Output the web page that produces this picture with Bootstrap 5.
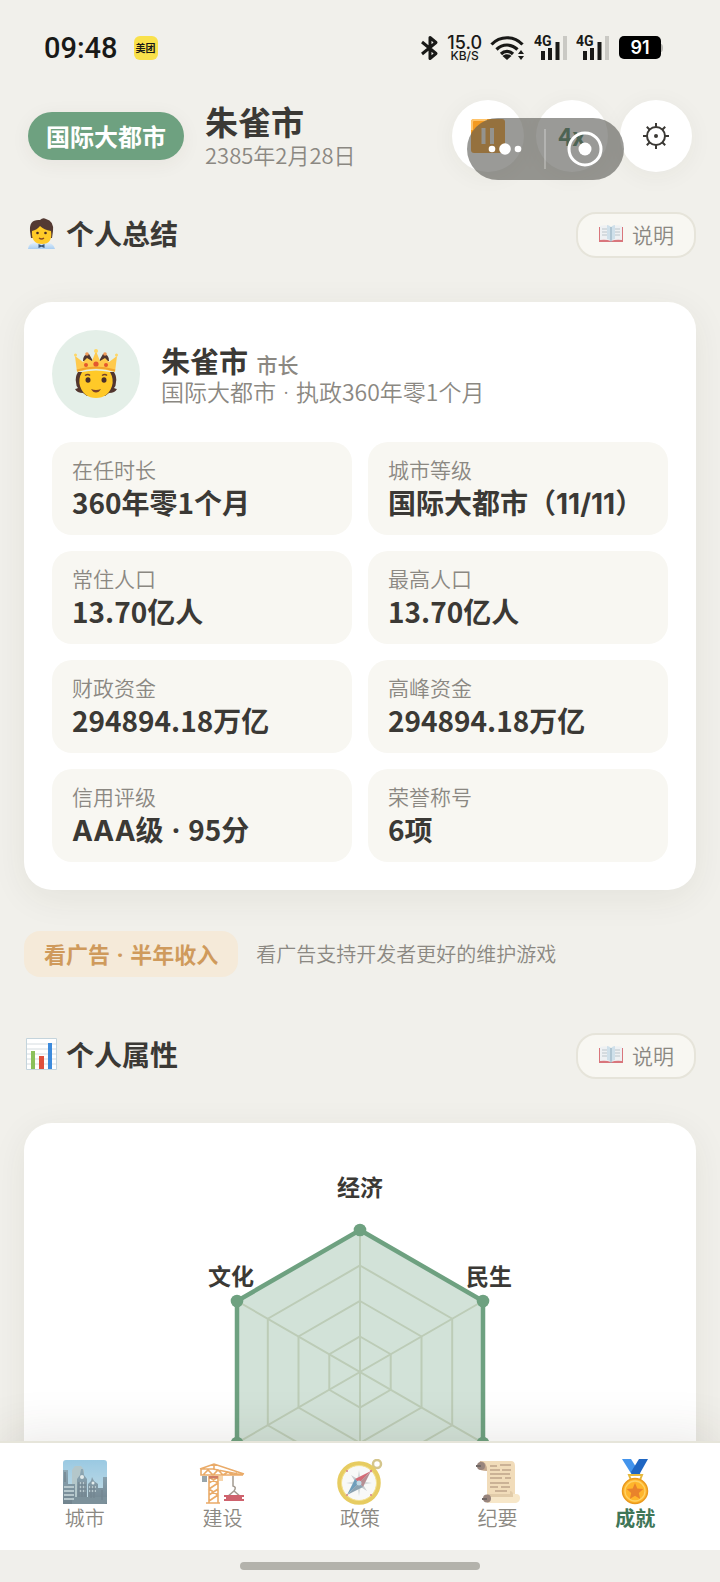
<!DOCTYPE html>
<html lang="zh-CN">
<head>
<meta charset="utf-8">
<meta name="viewport" content="width=device-width, initial-scale=1">
<title>朱雀市 · 成就</title>
<link href="https://cdn.jsdelivr.net/npm/bootstrap@5.3.0/dist/css/bootstrap.min.css" rel="stylesheet">
<style>
:root { --ink: #3b3935; --muted: #8b8882; --green: #6ea180; --deep: #3f7657; --page: #f1f0eb; }
body { background: var(--page); color: var(--ink); font-family: "Noto Sans CJK SC", sans-serif; font-size: 21px; line-height: 30px; }
svg { display: block; flex: none; }
button { color: inherit; }
.status { height: 96px; padding: 0 56px 0 44px; color: #191917; font-family: Inter, "Noto Sans CJK SC", sans-serif; }
.clock { font-family: Roboto, sans-serif; font-size: 29px; font-weight: 500; }
.app-tag { width: 24px; height: 24px; border-radius: 6px; background: #f9e14b; font-size: 10px; line-height: 24px; font-weight: 700; }
.net-speed { font-size: 18px; line-height: 15px; font-weight: 500; }
.net-speed small { font-size: 12px; line-height: 12px; display: block; }
.city-head { padding: 4px 28px 0; }
.rank { background: var(--green); font-size: 24px; line-height: 48px; padding: 0 18px; box-shadow: 0 4px 20px rgba(60,50,30,.06); }
.city-title { margin-left: 21px; }
.city-name { font-size: 33px; line-height: 36px; }
.date { font-size: 22px; }
.round { width: 72px; height: 72px; background: #fff; font-size: 24px; box-shadow: 0 4px 24px rgba(60,50,30,.05); }
.capsule { right: 68px; top: 18px; height: 62px; width: 157px; border-radius: 31px; background: rgba(86,86,82,.6); }
.capsule i { width: 2px; height: 40px; background: rgba(255,255,255,.25); }
.muted { color: var(--muted); font-weight: 350; }
.dot { font-family: "Noto Sans", sans-serif; line-height: 1; margin: 0 2px; }
.num { font-family: Inter, sans-serif; line-height: 1; }
.scroller { overflow-y: auto; scrollbar-width: none; padding: 40px 24px 0; }
.section-title { font-size: 28px; line-height: 42px; padding-bottom: 4px; }
.help { height: 46px; padding: 0 20px 2px; border: 2px solid #e6e4da; border-radius: 20px; background: #f8f7f2; }
.panel { background: #fff; border-radius: 28px; padding: 28px; margin-top: 44px; box-shadow: 0 8px 36px rgba(60,50,30,.07); }
.avatar { width: 88px; height: 88px; background: #e4efe8; }
.person { font-size: 29px; line-height: 34px; }
.role { font-size: 21px; line-height: 1; margin-left: 2px; color: var(--muted); font-weight: 500; }
.place { font-size: 23px; line-height: 28px; }
.tile { background: #f8f7f2; border-radius: 20px; padding: 12px 20px 15px; }
.tile dd { font-size: 28px; line-height: 36px; font-weight: 700; margin: 0; white-space: nowrap; }
.tile dt { font-weight: 350; color: var(--muted); }
.ad { margin: 41px 0 56px; }
.ad-btn { height: 46px; padding: 0 20px 2px; border-radius: 16px; background: #f5ead9; color: #cf9a5c; font-size: 22px; font-weight: 700; }
.ad-note { font-size: 20px; margin-left: 18px; }
.radar { width: 360px; max-width: 100%; margin: 11px auto 0; font-size: 23px; font-weight: 700; fill: var(--ink); }
.tabs { border-top: 2px solid #e6e5da; background: #fff; padding: 16px 16px 19px; box-shadow: 0 -8px 48px rgba(60,50,30,.1); z-index: 2; }
.tabs a { font-size: 20px; line-height: 26px; color: var(--muted); font-weight: 350; }
.tabs a svg { opacity: .72; }
.tabs a.active { color: var(--deep); font-weight: 700; }
.tabs a.active svg { opacity: 1; }
.home { height: 32px; background: #f0efeb; z-index: 3; }
.home span { width: 33.333%; height: 8px; background: #b3b2ab; }
</style>
</head>
<body>
<div class="vh-100 d-flex flex-column overflow-hidden">

<div class="status d-flex align-items-center justify-content-between flex-shrink-0">
  <div class="d-flex align-items-center gap-3">
    <span class="clock">09:48</span>
    <span class="app-tag text-center text-nowrap">美团</span>
  </div>
  <div class="d-flex align-items-center gap-2">
    <svg width="18" height="26" viewBox="1 0 18 26" fill="none" stroke="#191917" stroke-width="3" stroke-linejoin="round" aria-label="蓝牙"><path d="M2 7l14 11.500-6 5V2.500l6 5L2 19"/></svg>
    <span class="net-speed text-center">15.0<small>KB/S</small></span>
    <svg width="36" height="26" viewBox="0 0 36 26" fill="none" stroke="#191917" stroke-width="3.200"><path d="M1.500 9.500C10 0.500 24 0.500 32.500 9.500M6.500 14.500c6-6 15-6 21 0M11 19c3.500-3.500 8.500-3.500 12 0"/><path d="M12.500 21c2.500-2.500 6.500-2.500 9 0L17 25z" fill="#191917" stroke="none"/><path d="M28 19l3-4 3 4zM28 21l3 4 3-4z" fill="#191917" stroke="none"/></svg>
    <svg width="34" height="32" viewBox="0 -3 34 32" fill="#191917"><text x="0" y="11" font-family="Roboto" font-size="14" font-weight="700">4G</text><path d="M7 16h4v9H7zM14 13h4v12h-4zM21.500 7h4v18h-4z"/><path d="M29 1h4v24h-4z" fill="#cac9c4"/></svg>
    <svg width="34" height="32" viewBox="0 -3 34 32" fill="#191917"><text x="0" y="11" font-family="Roboto" font-size="14" font-weight="700">4G</text><path d="M7 16h4v9H7zM14 13h4v12h-4zM21.500 7h4v18h-4z"/><path d="M29 1h4v24h-4z" fill="#cac9c4"/></svg>
    <svg width="46" height="24" viewBox="0 0 46 24"><rect x="1" width="42" height="23" rx="5"/><path d="M43 8q2 0 2 4t-2 4z" fill="#b9b8b3"/><text x="22" y="18" font-size="18" font-weight="600" fill="#fff" text-anchor="middle">91</text></svg>
  </div>
</div>

<header class="city-head d-flex align-items-center flex-shrink-0">
  <span class="rank rounded-pill text-white fw-bold text-nowrap">国际大都市</span>
  <div class="city-title text-nowrap">
    <h1 class="city-name fw-bold m-0">朱雀市</h1>
    <div class="date muted">2385年2月28日</div>
  </div>
  <div class="ms-auto d-flex position-relative" style="gap:12px">
    <button type="button" class="btn round rounded-circle p-0 d-flex align-items-center justify-content-center" aria-label="暂停">
      <svg width="34" height="34" viewBox="0 0 34 34"><rect width="34" height="34" rx="3" fill="#f39a22"/><path d="M1 11V3q0-2 2-2h13" stroke="#ffc46b" stroke-width="2" fill="none"/><path d="M10.500 9h4v16h-4zM19 9h4v16h-4z" fill="#f1eee8"/></svg>
    </button>
    <button type="button" class="btn round rounded-circle p-0 fw-bold" style="color:var(--deep)">4x</button>
    <button type="button" class="btn round rounded-circle p-0 d-flex align-items-center justify-content-center" aria-label="设置">
      <svg width="28" height="28" viewBox="-14 -14 28 28" fill="none" stroke="#3b3935" stroke-width="2"><circle r="9"/><circle r="2" fill="#3b3935" stroke="none"/><path d="M0-9v-4M0 9v4M-9 0h-4M9 0h4M-6.300-6.300l-2.900-2.900M6.300 6.300l2.900 2.900M-6.300 6.300l-2.900 2.900M6.300-6.300l2.900-2.900"/></svg>
    </button>
    <div class="capsule position-absolute d-flex align-items-center">
      <button type="button" class="btn p-0 border-0 flex-fill d-flex justify-content-center" aria-label="更多"><svg width="34" height="14" fill="#fff"><circle cx="4" cy="7" r="3.300"/><circle cx="17" cy="7" r="5.800"/><circle cx="30" cy="7" r="3.300"/></svg></button>
      <i></i>
      <button type="button" class="btn p-0 border-0 flex-fill d-flex justify-content-center" aria-label="关闭"><svg width="36" height="36" viewBox="-18 -18 36 36"><circle r="16" fill="none" stroke="#fff" stroke-width="3"/><circle r="6.500" fill="#fff"/></svg></button>
    </div>
  </div>
</header>

<svg width="0" height="0" class="position-absolute" aria-hidden="true">
  <symbol id="book" viewBox="0 0 26 20"><path d="M1 3v15h24V3z" fill="#d9767c"/><path d="M2 2q6-2 11 1 5-3 11-1v14q-6-1-11 1-5-2-11-1z" fill="#eef1f3"/><path d="M13 3q-2-2-4-2v14q2 0 4 2 2-2 4-2V1q-2 0-4 2z" fill="#cfe0ea"/><path d="M13 3v15" stroke="#8fabbb"/><path d="M4 5h5M4 8h5M4 11h5M17 5h5M17 8h5M17 11h5" stroke="#bcc5ca"/></symbol>
</svg>

<main class="scroller flex-grow-1">
  <section>
    <div class="d-flex justify-content-between align-items-center">
      <h2 class="section-title fw-bold m-0 d-flex align-items-center gap-2">
        <svg width="34" height="34" viewBox="0 0 34 34"><defs><linearGradient id="shirt" x2="0" y2="1"><stop stop-color="#e6f2fc"/><stop offset="1" stop-color="#a9cef2"/></linearGradient></defs><path d="M4 33q0-6 9-7h8q9 1 10 7z" fill="url(#shirt)"/><path d="M6 15Q5 3 16 4q3-3 6-1 8 2 7 12l-1 7H7z" fill="#543a33"/><path d="M8 15q5-1 8-5 4 4 11 5 2 13-9 13T8 15z" fill="#ffca28"/><circle cx="13.500" cy="17" r="1.300" fill="#4a2d28"/><circle cx="21.500" cy="17" r="1.300" fill="#4a2d28"/><path d="M15 22q2.500 2 5 0" stroke="#8a4a20" fill="none" stroke-width="1.400"/><path d="M14.500 28l3 1.300 3-1.300v4l-3-1.300-3 1.300z" fill="#3c5878"/></svg>
        个人总结</h2>
      <button type="button" class="help muted d-flex align-items-center gap-2"><svg width="26" height="20"><use href="#book"/></svg>说明</button>
    </div>
    <div class="panel">
      <div class="d-flex align-items-center mb-4">
        <div class="avatar rounded-circle d-flex align-items-center justify-content-center">
          <svg width="44" height="50" viewBox="0 0 44 50"><path d="M4 23q-3 5-2 10 0 4 2 6-2 1-3 1 2 4 8 4l4 3h18l4-3q6 0 8-4-1 0-3-1 2-2 2-6 1-5-2-10z" fill="#51362f"/><path d="M8 23q14-3 28 0 4 7 2 14-4 12-16 12T6 37q-2-7 2-14z" fill="#ffc928"/><path d="M9 12q0-7 6-7l4 7zM25 12l4-7q6 0 6 7z" fill="#51362f"/><path d="M3 23L1 7l8 6 4-4 5 3 4-10 4 10 5-3 4 4 8-6-2 16q-19-6-38 0z" fill="#ffca4c"/><path d="M3 21.500q19-6 38 0" stroke="#f2a52c" stroke-width="2" fill="none"/><circle cx="22" cy="15" r="2.600" fill="#e4572e"/><circle cx="12" cy="16" r="2" fill="#e4572e"/><circle cx="32" cy="16" r="2" fill="#e4572e"/><g fill="#ffd765"><circle cx="1.500" cy="6" r="1.500"/><circle cx="22" cy="2" r="2"/><circle cx="42.500" cy="6" r="1.500"/></g><circle cx="13" cy="5" r="1.800" fill="#f09a58"/><circle cx="31" cy="5" r="1.800" fill="#f09a58"/><ellipse cx="14" cy="31" rx="2.500" ry="2.800" fill="#4a302b"/><ellipse cx="30" cy="31" rx="2.500" ry="2.800" fill="#4a302b"/><path d="M11 26.500q3-2 5 0M28 26.500q3-2 5 0" stroke="#74432a" stroke-width="1.500" fill="none"/><path d="M17 40q5 2 10 0-2 3.500-5 3.500T17 40" fill="#7a4228"/></svg>
        </div>
        <div style="margin-left:21px">
          <div class="person fw-bold">朱雀市 <span class="role">市长</span></div>
          <div class="place muted">国际大都市 <span class="dot">·</span> 执政360年零1个月</div>
        </div>
      </div>
      <div class="row g-3">
        <div class="col-6"><dl class="tile m-0"><dt>在任时长</dt><dd>360年零1个月</dd></dl></div>
        <div class="col-6"><dl class="tile m-0"><dt>城市等级</dt><dd>国际大都市（<span class="num">11/11</span>）</dd></dl></div>
        <div class="col-6"><dl class="tile m-0"><dt>常住人口</dt><dd>13.70亿人</dd></dl></div>
        <div class="col-6"><dl class="tile m-0"><dt>最高人口</dt><dd>13.70亿人</dd></dl></div>
        <div class="col-6"><dl class="tile m-0"><dt>财政资金</dt><dd>294894.18万亿</dd></dl></div>
        <div class="col-6"><dl class="tile m-0"><dt>高峰资金</dt><dd>294894.18万亿</dd></dl></div>
        <div class="col-6"><dl class="tile m-0"><dt>信用评级</dt><dd><span class="num">AAA</span>级 <span class="dot">·</span> 95分</dd></dl></div>
        <div class="col-6"><dl class="tile m-0"><dt>荣誉称号</dt><dd>6项</dd></dl></div>
      </div>
    </div>
  </section>

  <div class="ad d-flex align-items-center">
    <button type="button" class="ad-btn border-0 text-nowrap">看广告 <span class="dot">·</span> 半年收入</button>
    <span class="ad-note muted">看广告支持开发者更好的维护游戏</span>
  </div>

  <section>
    <div class="d-flex justify-content-between align-items-center">
      <h2 class="section-title fw-bold m-0 d-flex align-items-center gap-2">
        <svg width="34" height="34" viewBox="0 0 34 34"><path d="M2.500 1.500h30v31h-30z" fill="#fff" stroke="#c4d4dc"/><path d="M3 7h29M3 12h29M3 17h29M3 22h29M3 27h29" stroke="#d5dce0"/><path d="M7 14h4v18H7z" fill="#8cc05b"/><path d="M15 19h5v13h-5z" fill="#e0503c"/><path d="M24 6h4v26h-4z" fill="#3d8bdc"/></svg>
        个人属性</h2>
      <button type="button" class="help muted d-flex align-items-center gap-2"><svg width="26" height="20"><use href="#book"/></svg>说明</button>
    </div>
    <div class="panel">
      <svg class="radar" viewBox="-180 -210 360 410" text-anchor="middle" role="img" aria-label="个人属性雷达图">
        <g fill="none" stroke="#e0dfcf" stroke-width="2">
          <path d="M0-35.500l30.700 17.750v35.500L0 35.500l-30.700-17.750v-35.500z"/>
          <path d="M0-71l61.500 35.500v71L0 71l-61.500-35.500v-71z"/>
          <path d="M0-106.500l92.200 53.250v106.500L0 106.500l-92.200-53.250v-106.500z"/>
          <path d="M0-142V142M-123-71L123 71M-123 71L123-71"/>
        </g>
        <path d="M0-142l123 71V71L0 142-123 71V-71z" fill="#6ea180" fill-opacity=".31" stroke="#6ea180" stroke-width="4.500"/>
        <g fill="#6ea180"><circle cy="-142" r="6.300"/><circle cx="123" cy="-71" r="6.300"/><circle cx="123" cy="71" r="6.300"/><circle cy="142" r="6.300"/><circle cx="-123" cy="71" r="6.300"/><circle cx="-123" cy="-71" r="6.300"/></g>
        <text y="-176">经济</text><text x="129" y="-87">民生</text><text x="-129" y="-87">文化</text>
      </svg>
    </div>
  </section>
</main>

<nav class="tabs d-flex flex-shrink-0 position-relative">
  <a href="#city" class="flex-fill w-100 text-decoration-none d-flex flex-column align-items-center">
    <svg width="46" height="46" viewBox="0 0 46 46"><defs><linearGradient id="sky" x2="0" y2="1"><stop stop-color="#74b5d8"/><stop offset="1" stop-color="#b4d3de"/></linearGradient><linearGradient id="dusk" x2="0" y2="1"><stop stop-color="#63899b"/><stop offset="1" stop-color="#3b5463"/></linearGradient></defs><rect x="1" y="1" width="44" height="44" rx="3" fill="url(#sky)"/><path d="M10 45V11l3-4h6l3 4v34z" fill="#98b2b7"/><path d="M1 11h5v34H1zM1 25h12v20H1zM15 20l3-4 1-6 2 0 1 6 3 4v25H15zM26 25l3-3 1-4 2 4 4 3v20H26zM36 29h5V18h4v27h-9z" fill="url(#dusk)"/><path d="M10 38h35v4q0 3-3 3H10z" fill="#4b6776"/><path d="M2 28h10M2 32h10M2 36h10M2 40h10M17 24h7M17 28h7M17 32h7M27 28h7M27 32h7" stroke="#b7cbd0" stroke-width="1.300"/><path d="M17 23v15M20 23v15M23 23v15M29 27v12M32 27v12M3 13v10M40 31v10" stroke="#405a68" stroke-width="1.500"/><circle cx="20" cy="18" r="2" fill="#dbe5e5"/><circle cx="31" cy="24" r="1.500" fill="#dbe5e5"/></svg>城市</a>
  <a href="#build" class="flex-fill w-100 text-decoration-none d-flex flex-column align-items-center">
    <svg width="46" height="46" viewBox="0 0 46 46" fill="none" stroke="#e28b2f" stroke-width="1.600"><path d="M1 10l14-5 30 10M2 10h12l30 6H2zM4 16l5-5 5 5 5-5 5 5 5-3 5 3 4-2M15 5v5M10 17v27M19 17v27M10 24l9-6M10 18l9 6-9 6 9 6-9 6M19 24l-9 6M19 30l-9 6M19 36l-9 6M7 44h14"/><path d="M3 17h5v6H3z" fill="#72838a" stroke="none"/><path d="M10 17h9v2.500h-9z" fill="#bd4b29" stroke="none"/><path d="M20 17h4v5h-4z" fill="#f3c58d" stroke="none"/><path d="M34 17v10q4 1 1 5M28 38l7-6 7 6" stroke="#807466" stroke-width="1.500"/><path d="M25 36h20v2h-2v2h2v2H25v-2h2v-2h-2z" fill="#bc2636" stroke="none"/></svg>建设</a>
  <a href="#policy" class="flex-fill w-100 text-decoration-none d-flex flex-column align-items-center">
    <svg width="46" height="46" viewBox="0 0 46 46"><circle cx="40" cy="5" r="4" fill="none" stroke="#c4b060" stroke-width="2.500"/><circle cx="22" cy="24" r="19.500" fill="#f6f7f6" stroke="#deb925" stroke-width="4.500"/><circle cx="22" cy="24" r="17.500" fill="none" stroke="#f1d86b"/><path d="M22 11l2 11 11 2-11 2-2 11-2-11-11-2 11-2z" fill="#c9d0d2"/><path d="M14 16l8 5 8-5-5 8 5 8-8-5-8 5 5-8z" fill="#b3bcc0"/><path d="M34 12L18 20l4 4z" fill="#c43443"/><path d="M34 12L22 24l4 4z" fill="#99656c"/><path d="M10 36l8-16 4 4z" fill="#3979a2"/><path d="M10 36l12-12 4 4z" fill="#5f7f94"/><circle cx="22" cy="24" r="2.500" fill="#a9cadb"/><g fill="#c8545c"><circle cx="10" cy="12" r="1"/><circle cx="34" cy="12" r="1.200"/><circle cx="34" cy="36" r="1"/><circle cx="10" cy="36" r="1"/></g></svg>政策</a>
  <a href="#notes" class="flex-fill w-100 text-decoration-none d-flex flex-column align-items-center">
    <svg width="46" height="46" viewBox="0 0 46 46"><path d="M5 2h31q4 0 4 5v29H12V11H5z" fill="#edcfa0"/><path d="M12 35h29q4 0 4 4t-4 5H12z" fill="#f4deb5"/><path d="M12 35h23v-3q3 0 3 4v2H12z" fill="#d6b888"/><path d="M5 2q7 0 7 10-7 0-9-3z" fill="#ae8662"/><circle cx="6" cy="7" r="4" fill="#71554a"/><circle cx="12" cy="39.500" r="4" fill="#71554a"/><path d="M1 7h5M7 40h5" stroke="#3d302c" stroke-width="2"/><path d="M15 7h7M25 6h11M15 11h10M27 11h9M15 15h20M15 19h12M30 19h6M15 24h19M15 28h8M26 28h9M20 32h12" stroke="#a7825d" stroke-width="1.300"/></svg>纪要</a>
  <a href="#honor" class="active flex-fill w-100 text-decoration-none d-flex flex-column align-items-center" aria-current="page">
    <svg width="46" height="46" viewBox="0 0 46 46"><path d="M10 0h9l10 16h-9z" fill="#4394ec"/><path d="M27 0h9l-9 16h-7l-1-3z" fill="#1f66c2"/><path d="M17 16h13l-2 5h-9z" fill="none" stroke="#e6b93f" stroke-width="2"/><circle cx="23" cy="32" r="12.500" fill="#ffb52b" stroke="#e9991e" stroke-width="1.500"/><circle cx="23" cy="32" r="10" fill="none" stroke="#ffd265" stroke-width="1.300"/><path d="M23 24l2.300 5.500 6 .5-4.500 4 1.400 6-5.200-3.200-5.200 3.200 1.400-6-4.500-4 6-.5z" fill="#e9822b"/></svg>成就</a>
</nav>
<div class="home d-flex align-items-center justify-content-center flex-shrink-0 position-relative"><span class="rounded-pill"></span></div>

</div>
<script src="https://cdn.jsdelivr.net/npm/bootstrap@5.3.0/dist/js/bootstrap.bundle.min.js"></script>
</body>
</html>
